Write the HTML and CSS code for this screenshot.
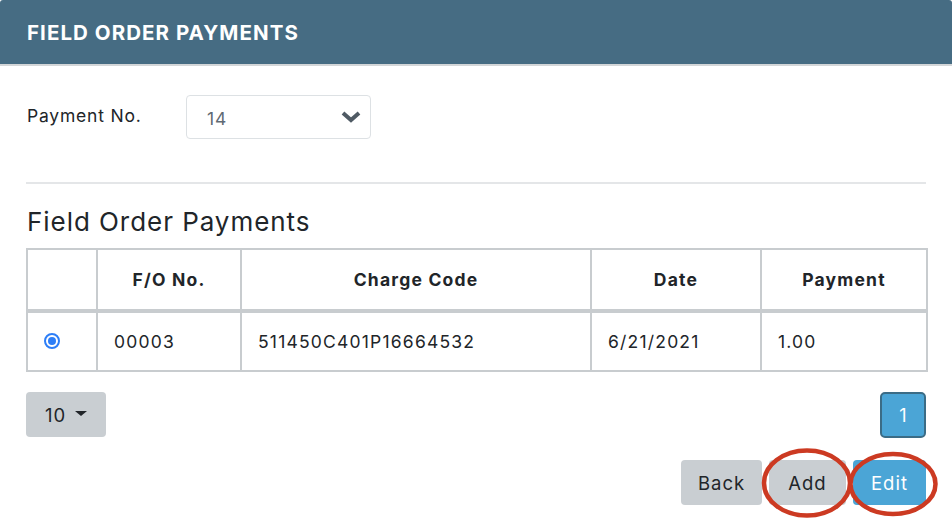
FILE: index.html
```html
<!DOCTYPE html>
<html>
<head>
<meta charset="utf-8">
<link rel="stylesheet" href="styles.css">
</head>
<body>
<div class="header"><h1 class="header-title">FIELD ORDER PAYMENTS</h1></div>
<div class="content">
  <div class="form-row">
    <label class="form-label">Payment No.</label>
    <div class="select">
      <span class="select-value">14</span>
      <svg class="chevron" width="20" height="14" viewBox="0 0 20 14"><path d="M2 3 L10 10 L18 3" fill="none" stroke="#4f5a64" stroke-width="4" stroke-linejoin="miter"/></svg>
    </div>
  </div>
  <hr class="divider">
  <h2 class="section-title">Field Order Payments</h2>
  <table class="grid">
    <thead>
      <tr>
        <th class="c1"></th>
        <th class="c2">F/O No.</th>
        <th class="c3">Charge Code</th>
        <th class="c4">Date</th>
        <th class="c5">Payment</th>
      </tr>
    </thead>
    <tbody>
      <tr>
        <td class="radio-cell"><span class="radio"></span></td>
        <td>00003</td>
        <td>511450C401P16664532</td>
        <td>6/21/2021</td>
        <td>1.00</td>
      </tr>
    </tbody>
  </table>
  <div class="pager-row">
    <button class="btn btn-grey page-size">10 <span class="caret"></span></button>
    <button class="page-btn">1</button>
  </div>
  <div class="actions">
    <button class="btn btn-grey btn-back">Back</button>
    <button class="btn btn-grey btn-add">Add</button>
    <button class="btn btn-blue btn-edit">Edit</button>
    <svg class="mark mark-add" width="92" height="72" viewBox="0 0 92 72"><ellipse cx="46" cy="36" rx="43" ry="32.5" fill="none" stroke="#cc3a22" stroke-width="4.5"/></svg>
    <svg class="mark mark-edit" width="92" height="68" viewBox="0 0 92 68"><ellipse cx="46" cy="34" rx="42.5" ry="30" fill="none" stroke="#cc3a22" stroke-width="4.5"/></svg>
  </div>
</div>
</body>
</html>
```
FILE: styles.css
```css
* { box-sizing: border-box; }
html, body { margin: 0; padding: 0; background: #fff; }
body { font-family: Inter, "Noto Sans", sans-serif; color: #212529; width: 952px; height: 518px; overflow: hidden; }

.header {
  height: 66px;
  background: #466c83;
  border-bottom: 2px solid #d3d6d8;
  border-top-left-radius: 3px;
  border-top-right-radius: 3px;
  display: flex;
  align-items: center;
  padding-left: 27px;
}
.header-title {
  margin: 0;
  color: #fff;
  font-size: 20.5px;
  font-weight: 700;
  letter-spacing: 1.05px;
  padding-top: 0;
}

.content { padding: 29px 26px 0 26px; }

.form-row { display: flex; align-items: center; height: 44px; }
.form-label { width: 160px; padding-left: 1px; font-size: 17.5px; letter-spacing: 0.8px; color: #212529; margin-top: -3px; }
.select {
  width: 185px; height: 44px;
  border: 1px solid #dde1e4; border-radius: 4px;
  display: flex; align-items: center; justify-content: space-between;
  padding: 0 9px 0 20px;
}
.select-value { font-size: 17.5px; color: #5f6a74; padding-top: 2px; letter-spacing: 0.8px; }
.chevron { display: block; }

.divider { margin: 43px 0 0 0; border: 0; border-top: 2px solid #e4e6e8; }

.section-title { margin: 22px 0 0 1px; font-size: 26px; font-weight: 400; letter-spacing: 0.95px; line-height: 32px; color: #212529; }

.grid { margin-top: 10px; width: 900px; border-collapse: collapse; table-layout: fixed; font-size: 17.5px; letter-spacing: 1.2px; }
.grid th, .grid td { border: 2px solid #c8cccf; }
.grid th { height: 62px; font-weight: 700; text-align: center; border-bottom-width: 4px; }
.grid td { height: 60px; padding: 0 0 0 16px; text-align: left; }
.grid .c1 { width: 70px; }
.grid .c2 { width: 144px; }
.grid .c3 { width: 350px; }
.grid .c4 { width: 170px; }
.grid .c5 { width: 166px; }
.grid td.radio-cell { padding-left: 16px; }
.radio { display: inline-block; width: 16px; height: 16px; border-radius: 50%; border: 2px solid #2d7ef7; position: relative; vertical-align: middle; margin-top: -4px; }
.radio::after { content: ""; position: absolute; left: 2px; top: 2px; width: 8px; height: 8px; border-radius: 50%; background: #2d7ef7; }

.pager-row { display: flex; justify-content: space-between; margin-top: 20px; }
.btn { font-family: inherit; border: 0; border-radius: 4px; height: 45px; font-size: 18.5px; letter-spacing: 1px; padding: 0; cursor: pointer; color: #212529; }
.btn-grey { background: #c9ced2; }
.btn-blue { background: #4ba5d6; color: #fff; }
.page-size { width: 80px; display: flex; align-items: center; justify-content: center; gap: 9px; }
.caret { display: inline-block; width: 0; height: 0; border-left: 6px solid transparent; border-right: 6px solid transparent; border-top: 5px solid #212529; margin-top: -3px; }
.page-btn { width: 46px; height: 46px; border: 2px solid #3b6c86; border-radius: 5px; background: #4ba5d6; color: #fff; font-family: inherit; font-size: 18px; padding: 0; }

.actions { position: relative; display: flex; justify-content: flex-end; gap: 7px; margin-top: 22px; }
.btn-back { width: 81px; }
.btn-add { width: 77px; }
.btn-edit { width: 73px; }
.mark { position: absolute; pointer-events: none; }
.mark-add { left: 735px; top: -13px; }
.mark-edit { left: 820.5px; top: -10px; }
```
